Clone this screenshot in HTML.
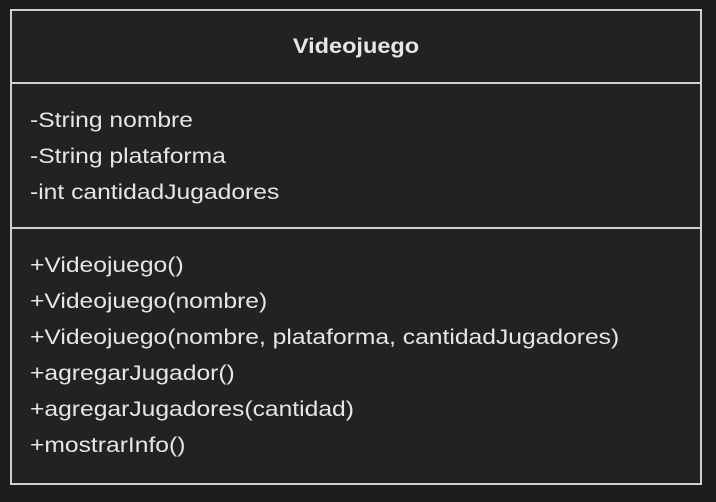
<!DOCTYPE html>
<html><head><meta charset="utf-8"><style>
body{margin:0;background:#1c1c1e;width:716px;height:502px;overflow:hidden;font-family:"Liberation Sans",sans-serif;color:#e6e6e6}
.box{position:absolute;left:10px;top:9px;width:688px;height:472px;border:2px solid #cfcfcf;background:#222222}
.hdr{position:absolute;left:0;top:0;width:688px;height:72px;line-height:72px;text-align:center;font-weight:bold;font-size:21px;transform:scaleX(1.12)}
.sep{position:absolute;left:0;width:688px;height:2px;background:#cfcfcf}
.l{position:absolute;left:18px;font-size:21.5px;line-height:36px;white-space:nowrap;transform:scaleX(1.146);transform-origin:0 0}
</style></head><body>
<div class="box">
<div class="hdr">Videojuego</div>
<div class="sep" style="top:71px"></div>
<div class="l" style="top:91px">-String nombre<br>-String plataforma<br>-int cantidadJugadores</div>
<div class="sep" style="top:216px"></div>
<div class="l" style="top:236px">+Videojuego()<br>+Videojuego(nombre)<br>+Videojuego(nombre, plataforma, cantidadJugadores)<br>+agregarJugador()<br>+agregarJugadores(cantidad)<br>+mostrarInfo()</div>
</div>
</body></html>
